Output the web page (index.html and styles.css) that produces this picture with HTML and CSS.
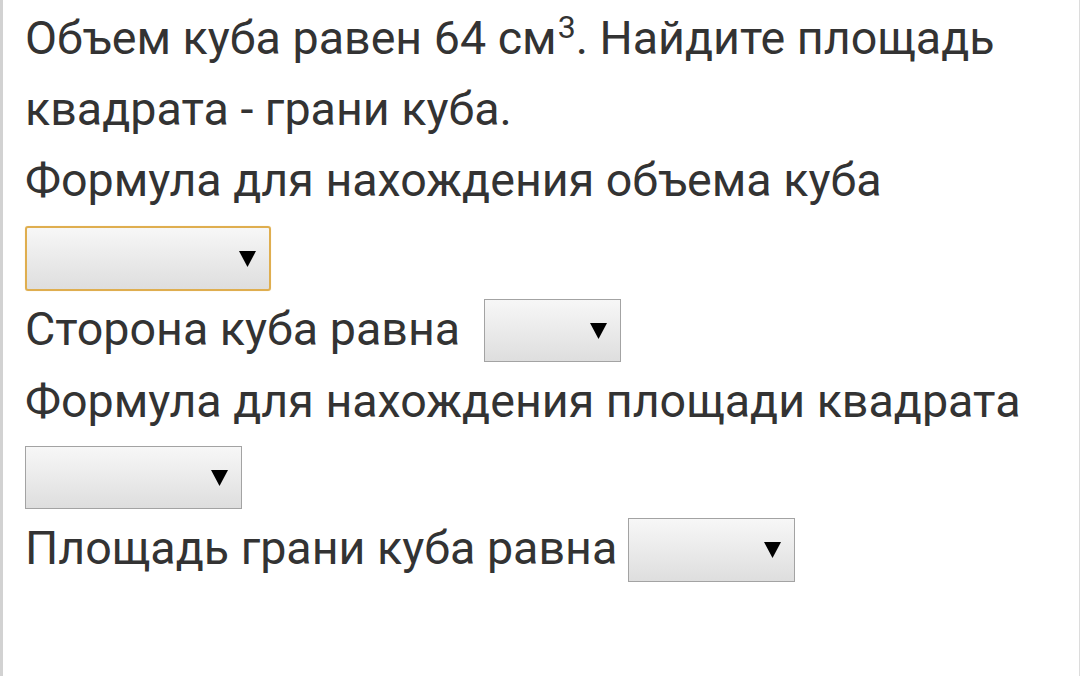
FILE: index.html
```html
<!DOCTYPE html>
<html lang="ru">
<head>
<meta charset="utf-8">
<link rel="stylesheet" href="styles.css">
</head>
<body>
<div class="page">
  <div class="task">
    <div class="line">Объем куба равен 64 см<sup>3</sup>. Найдите площадь</div>
    <div class="line">квадрата - грани куба.</div>
    <div class="line">Формула для нахождения объема куба</div>
    <div class="select select-focus select-w1">
      <svg class="arrow" width="17" height="16" viewBox="0 0 17 16"><path d="M0 0H17L8.5 16Z"/></svg>
    </div>
    <div class="row row-side">
      <span class="label">Сторона куба равна</span>
      <div class="select select-w2">
        <svg class="arrow" width="17" height="16" viewBox="0 0 17 16"><path d="M0 0H17L8.5 16Z"/></svg>
      </div>
    </div>
    <div class="line line-tight">Формула для нахождения площади квадрата</div>
    <div class="select select-w3">
      <svg class="arrow" width="17" height="16" viewBox="0 0 17 16"><path d="M0 0H17L8.5 16Z"/></svg>
    </div>
    <div class="row row-area">
      <span class="label">Площадь грани куба равна</span>
      <div class="select select-w4">
        <svg class="arrow" width="17" height="16" viewBox="0 0 17 16"><path d="M0 0H17L8.5 16Z"/></svg>
      </div>
    </div>
  </div>
</div>
</body>
</html>
```

FILE: styles.css
```css
html, body {
  margin: 0;
  padding: 0;
  height: 100%;
  background: #ffffff;
}

.page {
  box-sizing: border-box;
  height: 100%;
  border-left: 3px solid #d2d2d2;
  border-right: 1px solid #dcdcdc;
  padding: 3px 0 0 22px;
  font-family: Roboto, "Noto Sans", sans-serif;
  font-size: 46.6px;
  color: #333333;
}

.line {
  line-height: 71px;
  height: 71px;
  white-space: nowrap;
}

.line sup {
  font-size: 32px;
  line-height: 0;
  vertical-align: 16px;
  margin-left: 1px;
}

.line-tight {
  margin-top: 4px;
}

.select {
  box-sizing: border-box;
  display: flex;
  align-items: center;
  justify-content: flex-end;
  padding-right: 13px;
  border: 1px solid #a3a3a3;
  background: linear-gradient(#f7f7f7, #dedede);
}

.select-focus {
  border: 2px solid #dfae4f;
  border-radius: 3px;
  padding-right: 13px;
  box-shadow: 0 0 1px #f0d8a0;
}

.arrow path {
  fill: #000000;
}

.select-w1 {
  width: 246px;
  height: 65px;
  margin-top: 10px;
}

.select-w2 {
  width: 137px;
  height: 63px;
  margin-left: 24px;
}

.select-w3 {
  width: 217px;
  height: 63px;
  margin-top: 9px;
}

.select-w4 {
  width: 167px;
  height: 64px;
  margin-left: 11px;
}

.row {
  display: flex;
  align-items: center;
  white-space: nowrap;
}

.row-side {
  margin-top: 8px;
}

.row-area {
  margin-top: 9px;
}

.label {
  line-height: 60px;
  position: relative;
  top: -2px;
}
```
